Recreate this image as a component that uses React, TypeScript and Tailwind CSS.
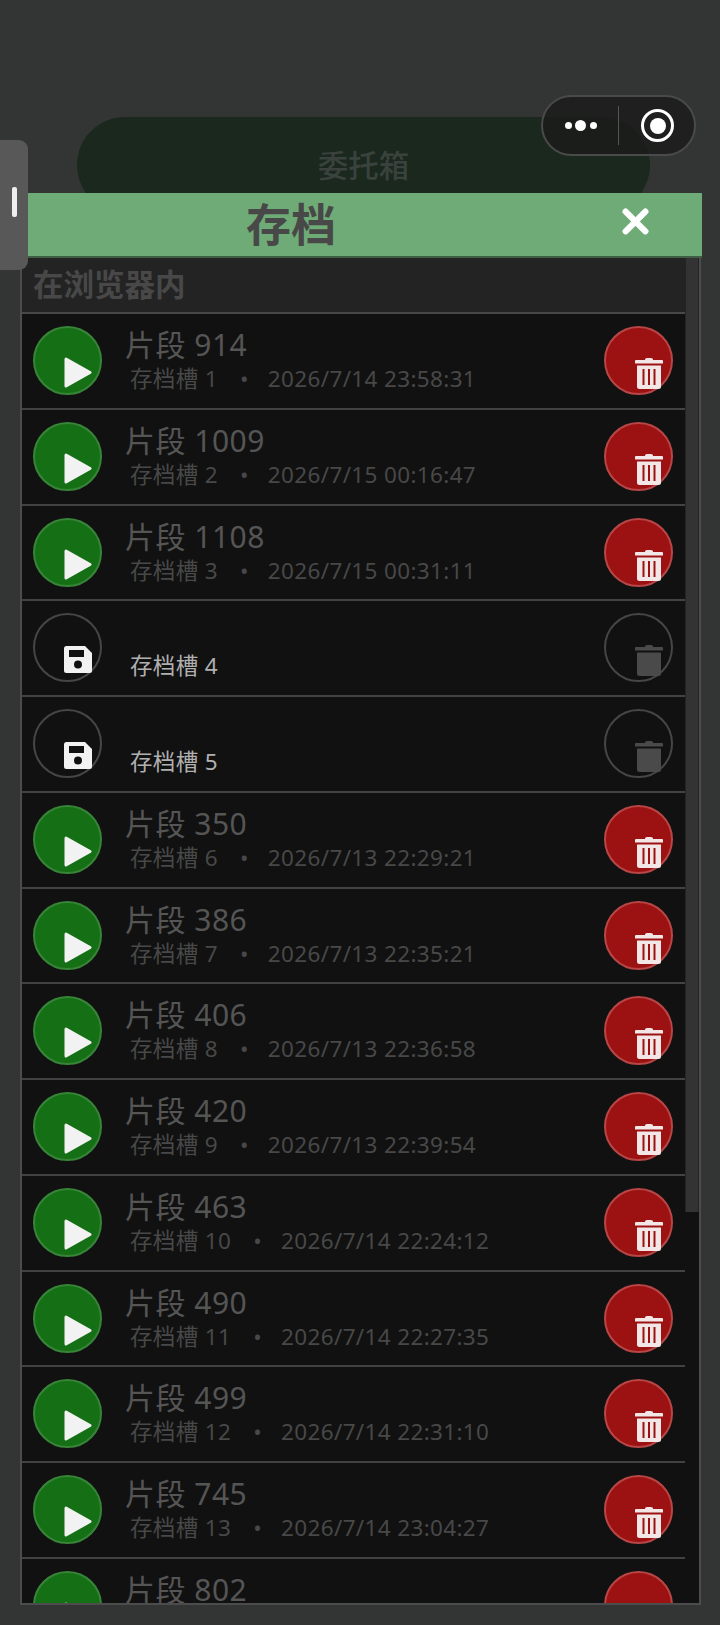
import React from 'react';

const font = "font-['Noto_Sans','Noto_Sans_CJK_SC',sans-serif]";

interface Slot {
  slot: number;
  title?: string;
  time?: string;
}

const slots: Slot[] = [
  { slot: 1, title: '片段 914', time: '2026/7/14 23:58:31' },
  { slot: 2, title: '片段 1009', time: '2026/7/15 00:16:47' },
  { slot: 3, title: '片段 1108', time: '2026/7/15 00:31:11' },
  { slot: 4 },
  { slot: 5 },
  { slot: 6, title: '片段 350', time: '2026/7/13 22:29:21' },
  { slot: 7, title: '片段 386', time: '2026/7/13 22:35:21' },
  { slot: 8, title: '片段 406', time: '2026/7/13 22:36:58' },
  { slot: 9, title: '片段 420', time: '2026/7/13 22:39:54' },
  { slot: 10, title: '片段 463', time: '2026/7/14 22:24:12' },
  { slot: 11, title: '片段 490', time: '2026/7/14 22:27:35' },
  { slot: 12, title: '片段 499', time: '2026/7/14 22:31:10' },
  { slot: 13, title: '片段 745', time: '2026/7/14 23:04:27' },
  { slot: 14, title: '片段 802' },
];

const PlayIcon = () => (
  <svg viewBox="0 0 28 32" className="absolute left-[29px] top-[28px] h-[33px] w-[28px]">
    <path d="M2 2.500 L26 16 L2 29.500 Z" fill="#f2f2f2" stroke="#f2f2f2" strokeWidth="3" strokeLinejoin="round" />
  </svg>
);

const SaveIcon = () => (
  <svg viewBox="0 0 28 27" className="absolute left-[29px] top-[31px] h-[27px] w-[28px]">
    <path
      fillRule="evenodd"
      fill="#f2f2f2"
      d="M2.500 0H21L28 7V24.500A2.500 2.500 0 0 1 25.500 27H2.500A2.500 2.500 0 0 1 0 24.500V2.500A2.500 2.500 0 0 1 2.500 0ZM5 4V11H20V4ZM14 14.500A4 4 0 1 0 14 22.500A4 4 0 1 0 14 14.500Z"
    />
  </svg>
);

const TrashIcon = ({ fill, slit }: { fill: string; slit?: string }) => (
  <svg viewBox="0 0 28 32" className="absolute left-[29px] top-[29px] h-[32px] w-[28px]">
    <path d="M10 2.500Q10 1 12 1H16Q18 1 18 2.500V3H27Q28 3 28 4V6.500H0V4Q0 3 1 3H10Z" fill={fill} />
    <path d="M2 8.500H26V29.500Q26 32 23.500 32H4.500Q2 32 2 29.500Z" fill={fill} />
    {slit && (
      <>
        <rect x="7.500" y="12" width="2" height="16" fill={slit} />
        <rect x="13" y="12" width="2" height="16" fill={slit} />
        <rect x="18.500" y="12" width="2" height="16" fill={slit} />
      </>
    )}
  </svg>
);

const SlotRow = ({ item }: { item: Slot }) => {
  const filled = !!item.title;
  return (
    <div className="flex h-[95.77px] shrink-0 items-start border-b-2 border-[#424242] bg-[#111111] pl-[11px] pr-[13px] pt-[12px]">
      <div className={`relative h-[69px] w-[69px] shrink-0 rounded-full border-2 ${filled ? 'border-[#388438] bg-[#157015]' : 'border-[#464646]'}`}>
        {filled ? <PlayIcon /> : <SaveIcon />}
      </div>
      <div className="ml-[23px] min-w-0 flex-1">
        <div className="mt-[5px] h-[28px] text-[30px] leading-[28px] tracking-[0.5px] text-[#555555]">{item.title}</div>
        {item.slot < 14 && (
          <div className={`mt-[5px] flex pl-[5px] text-[22.500px] leading-[30px] tracking-[0.35px] ${filled ? 'text-[#484848]' : 'text-[#b0b0b0]'}`}>
            <span>存档槽 {item.slot}</span>
            {filled && <span className="ml-[22px] mr-[19px]">•</span>}
            {filled && <span>{item.time}</span>}
          </div>
        )}
      </div>
      <div className={`relative h-[69px] w-[69px] shrink-0 rounded-full border-2 ${filled ? 'border-[#b84646] bg-[#9c1212]' : 'border-[#464646]'}`}>
        {filled ? <TrashIcon fill="#f2e6e6" slit="#9c1212" /> : <TrashIcon fill="#4a4a4a" />}
      </div>
    </div>
  );
};

export default function App() {
  return (
    <div className={`relative h-[1625px] w-[720px] overflow-hidden bg-[#333534] pt-[193px] ${font}`}>
      {/* page behind the dialog */}
      <div className="absolute left-[77px] top-[117px] flex h-[96px] w-[573px] items-center justify-center rounded-[48px] bg-[#1a281d] pt-[2px] text-[30.500px] font-medium text-[#3a423d]">
        <span>委托箱</span>
      </div>

      {/* wechat capsule */}
      <div className="absolute left-[541px] top-[95px] z-20 flex h-[61px] w-[155px] items-center rounded-full border-2 border-[#4a4a4a] bg-[#1a1a1a]/80">
        <div className="flex w-[75px] items-center justify-center gap-[3.500px]">
          <span className="h-[7px] w-[7px] rounded-full bg-white" />
          <span className="h-[11px] w-[11px] rounded-full bg-white" />
          <span className="h-[7px] w-[7px] rounded-full bg-white" />
        </div>
        <div className="h-[39px] w-px bg-[#555555]" />
        <div className="ml-[22px] flex h-[33px] w-[33px] items-center justify-center rounded-full border-[3px] border-white">
          <span className="h-[16px] w-[16px] rounded-full bg-white" />
        </div>
      </div>

      {/* side handle */}
      <div className="absolute left-0 top-[140px] z-20 flex h-[130px] w-[28px] items-center rounded-r-[9px] bg-[#585858]">
        <span className="ml-[12px] -mt-[6px] h-[30px] w-[5px] rounded-[2px] bg-[#eeeeee]" />
      </div>

      {/* dialog */}
      <div className="relative z-10 ml-[28px] flex h-[65px] w-[674px] items-center border-b-2 border-[#3f5f44] bg-[#6fab76]">
        <span className="ml-[218px] text-[45px] font-bold leading-none text-[#484848]">存档</span>
        <svg viewBox="0 0 26 26" className="ml-[286px] -mt-[6px] h-[27px] w-[27px]">
          <path d="M3.500 3.500L22.500 22.500M22.500 3.500L3.500 22.500" stroke="#ffffff" strokeWidth="6" strokeLinecap="round" />
        </svg>
      </div>

      <div className="relative ml-[20px] h-[1347px] w-[681px] overflow-hidden border-b-2 border-l-2 border-r-2 border-[#4c4c4c]">
        <div className="flex w-[664px] flex-col">
          <div className="flex h-[56px] shrink-0 items-center border-b-2 border-[#484848] bg-[#232323] pl-[11px] text-[30.500px] font-bold text-[#484848]">
            在浏览器内
          </div>
          {slots.map((item) => (
            <SlotRow key={item.slot} item={item} />
          ))}
        </div>
        {/* scrollbar */}
        <div className="absolute right-0 top-0 h-full w-[14px] bg-[#111111]">
          <div className="h-[954px] w-full border-x border-[#242424] bg-[#333333]" />
        </div>
      </div>
    </div>
  );
}
